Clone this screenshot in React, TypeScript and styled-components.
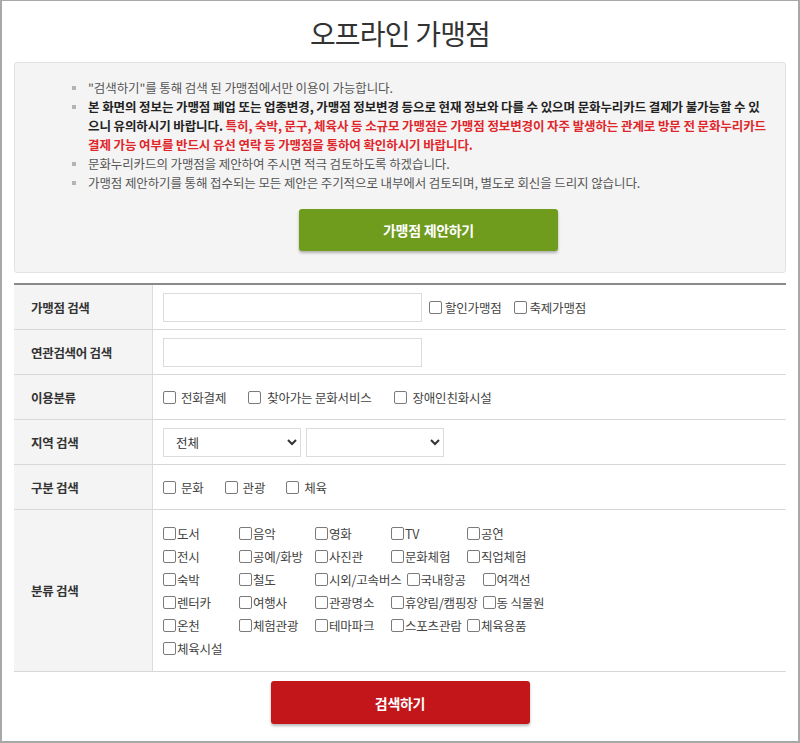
import React from 'react'
import styled, { createGlobalStyle } from 'styled-components'

const GlobalStyle = createGlobalStyle`
  html, body {
    margin: 0;
    padding: 0;
    background: #fff;
  }
  body {
    font-family: "Noto Sans CJK KR", "Noto Sans", sans-serif;
    color: #444;
  }
  * {
    box-sizing: border-box;
  }
`

const categories = [
  '도서', '음악', '영화', 'TV', '공연',
  '전시', '공예/화방', '사진관', '문화체험', '직업체험',
  '숙박', '철도', '시외/고속버스', '국내항공', '여객선',
  '렌터카', '여행사', '관광명소', '휴양림/캠핑장', '동 식물원',
  '온천', '체험관광', '테마파크', '스포츠관람', '체육용품',
  '체육시설',
]

function Check({ label, gap = 3 }: { label: string; gap?: number }) {
  return (
    <CheckLabel $gap={gap}>
      <Box type="checkbox" />
      <span>{label}</span>
    </CheckLabel>
  )
}

export default function App() {
  return (
    <>
      <GlobalStyle />
      <Frame>
        <Title>오프라인 가맹점</Title>

        <InfoBox>
          <Notice>
            <li>"검색하기"를 통해 검색 된 가맹점에서만 이용이 가능합니다.</li>
            <li>
              <strong>
                본 화면의 정보는 가맹점 폐업 또는 업종변경, 가맹점 정보변경 등으로 현재 정보와 다를 수 있으며 문화누리카드 결제가 불가능할 수 있
                <br />
                으니 유의하시기 바랍니다.{' '}
              </strong>
              <Warn>
                특히, 숙박, 문구, 체육사 등 소규모 가맹점은 가맹점 정보변경이 자주 발생하는 관계로 방문 전 문화누리카드
                <br />
                결제 가능 여부를 반드시 유선 연락 등 가맹점을 통하여 확인하시기 바랍니다.
              </Warn>
            </li>
            <li>문화누리카드의 가맹점을 제안하여 주시면 적극 검토하도록 하겠습니다.</li>
            <li>가맹점 제안하기를 통해 접수되는 모든 제안은 주기적으로 내부에서 검토되며, 별도로 회신을 드리지 않습니다.</li>
          </Notice>
          <SuggestRow>
            <ActionButton $color="#6f9c1d">가맹점 제안하기</ActionButton>
          </SuggestRow>
        </InfoBox>

        <SearchTable>
          <Row>
            <Label>가맹점 검색</Label>
            <Cell>
              <TextInput />
              <Options $gap={12} $lead={2}>
                <Check label="할인가맹점" />
                <Check label="축제가맹점" />
              </Options>
            </Cell>
          </Row>
          <Row>
            <Label>연관검색어 검색</Label>
            <Cell>
              <TextInput />
            </Cell>
          </Row>
          <Row>
            <Label>이용분류</Label>
            <Cell>
              <Options $gap={22}>
                <Check label="전화결제" gap={5} />
                <Check label="찾아가는 문화서비스" gap={6} />
                <Check label="장애인친화시설" gap={6} />
              </Options>
            </Cell>
          </Row>
          <Row>
            <Label>지역 검색</Label>
            <Cell>
              <Select defaultValue="all">
                <option value="all">전체</option>
              </Select>
              <Select defaultValue="">
                <option value=""></option>
              </Select>
            </Cell>
          </Row>
          <Row>
            <Label>구분 검색</Label>
            <Cell>
              <Options $gap={21}>
                <Check label="문화" gap={5} />
                <Check label="관광" gap={5} />
                <Check label="체육" gap={5} />
              </Options>
            </Cell>
          </Row>
          <Row>
            <Label>분류 검색</Label>
            <Cell $tall>
              <CategoryGrid>
                {categories.map((c) => (
                  <CategoryItem key={c}>
                    <Check label={c} gap={1} />
                  </CategoryItem>
                ))}
              </CategoryGrid>
            </Cell>
          </Row>
        </SearchTable>

        <SearchRow>
          <ActionButton $color="#c3161b">검색하기</ActionButton>
        </SearchRow>
      </Frame>
    </>
  )
}

const Frame = styled.div`
  width: 800px;
  height: 743px;
  border: 1px solid #a8a8a8;
  border-width: 1px 2px 2px 2px;
  padding: 0 12px;
  overflow: hidden;
`

const Title = styled.h1`
  margin: 0;
  height: 61px;
  display: flex;
  align-items: center;
  justify-content: center;
  padding-top: 3px;
  font-size: 28px;
  font-weight: 400;
  letter-spacing: -0.8px;
  color: #333;
`

const InfoBox = styled.div`
  background: #f4f4f4;
  border: 1px solid #e2e2e2;
  border-radius: 3px;
  height: 211px;
  padding: 15px 0 0;
`

const Notice = styled.ul`
  list-style: none;
  margin: 0;
  padding: 0 10px 0 73px;
  font-size: 12.5px;
  line-height: 19px;
  letter-spacing: -0.1px;
  color: #555;
  white-space: nowrap;

  li {
    position: relative;
  }

  li::before {
    content: '';
    position: absolute;
    left: -16px;
    top: 8px;
    width: 4px;
    height: 4px;
    background: #b4b4b4;
  }

  strong {
    color: #222;
    font-weight: 700;
  }
`

const Warn = styled.span`
  color: #e0262b;
  font-weight: 700;
`

const SuggestRow = styled.div`
  display: flex;
  justify-content: center;
  padding-left: 57px;
  margin-top: 17px;
`

const ActionButton = styled.button<{ $color: string }>`
  width: 259px;
  height: 42px;
  border: 0;
  border-radius: 3px;
  background: ${(p) => p.$color};
  color: #fff;
  font-family: inherit;
  font-size: 14px;
  font-weight: 700;
  letter-spacing: -0.3px;
  box-shadow: 0 2px 3px rgba(0, 0, 0, 0.28);
  cursor: pointer;
`

const SearchTable = styled.div`
  margin-top: 10px;
  border-top: 2px solid #8a8a8a;
`

const Row = styled.div`
  display: flex;
  border-bottom: 1px solid #d8d8d8;
`

const Label = styled.div`
  width: 139px;
  flex-shrink: 0;
  background: #f4f4f4;
  border-right: 1px solid #dcdcdc;
  display: flex;
  align-items: center;
  padding-left: 17px;
  font-size: 12.5px;
  font-weight: 700;
  color: #333;
  letter-spacing: -0.3px;
`

const Cell = styled.div<{ $tall?: boolean }>`
  flex: 1;
  display: flex;
  align-items: center;
  gap: 5px;
  min-height: 44px;
  padding: ${(p) => (p.$tall ? '12px 10px 11px' : '0 10px')};
`

const TextInput = styled.input.attrs({ type: 'text' })`
  width: 259px;
  height: 29px;
  border: 1px solid #dcdcdc;
  background: #fff;
  outline: none;
`

const Options = styled.div<{ $gap: number; $lead?: number }>`
  display: flex;
  align-items: center;
  gap: ${(p) => p.$gap}px;
  margin-left: ${(p) => p.$lead ?? 0}px;
`

const CheckLabel = styled.label<{ $gap: number }>`
  display: inline-flex;
  align-items: center;
  gap: ${(p) => p.$gap}px;
  font-size: 12.5px;
  color: #444;
  letter-spacing: -0.2px;
  white-space: nowrap;
  line-height: 23px;
`

const Box = styled.input`
  appearance: none;
  margin: 0;
  width: 13px;
  height: 13px;
  border: 1px solid #7a7a7a;
  border-radius: 2px;
  background: #fff;
  flex-shrink: 0;
`

const Select = styled.select`
  width: 138px;
  height: 29px;
  border: 1px solid #dcdcdc;
  background: #fff;
  padding-left: 8px;
  font-family: inherit;
  font-size: 12.5px;
  color: #333;
`

const CategoryGrid = styled.div`
  display: flex;
  flex-wrap: wrap;
  width: 420px;
  column-gap: 5px;
`

const CategoryItem = styled.div`
  min-width: 71px;
  height: 23px;
  display: flex;
  align-items: center;
`

const SearchRow = styled.div`
  display: flex;
  justify-content: center;
  margin-top: 9px;

  button {
    height: 43px;
  }
`
